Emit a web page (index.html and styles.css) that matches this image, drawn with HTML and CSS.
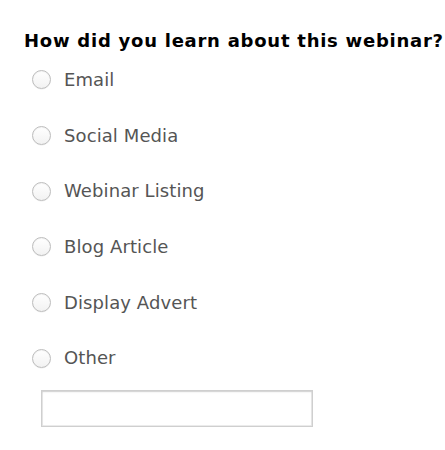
FILE: index.html
```html
<!DOCTYPE html>
<html>
<head>
<meta charset="utf-8">
<link rel="stylesheet" href="styles.css">
</head>
<body>
<form class="survey">
  <h2 class="question">How did you learn about this webinar?</h2>
  <div class="options">
    <label class="option"><span class="radio"></span><span class="label">Email</span></label>
    <label class="option"><span class="radio"></span><span class="label">Social Media</span></label>
    <label class="option"><span class="radio"></span><span class="label">Webinar Listing</span></label>
    <label class="option"><span class="radio"></span><span class="label">Blog Article</span></label>
    <label class="option"><span class="radio"></span><span class="label">Display Advert</span></label>
    <label class="option"><span class="radio"></span><span class="label">Other</span></label>
  </div>
  <div class="other-box"></div>
</form>
</body>
</html>
```
FILE: styles.css
```css
html, body {
  margin: 0;
  padding: 0;
  background: #fff;
}
.survey {
  font-family: "DejaVu Sans", Verdana, sans-serif;
  padding-left: 24px;
}
.question {
  margin: 30px 0 0 0;
  font-size: 18px;
  line-height: 22px;
  letter-spacing: 0.75px;
  font-weight: bold;
  color: #000;
  white-space: nowrap;
}
.options {
  display: flex;
  flex-direction: column;
}
.option {
  display: flex;
  align-items: center;
  height: 55.7px;
  padding-left: 8px;
}
.radio {
  width: 17px;
  height: 17px;
  border-radius: 50%;
  border: 1px solid #bdbdbd;
  background: linear-gradient(#ffffff, #f2f2f2);
  box-shadow: inset 0 1px 1px rgba(0,0,0,0.05), 0 0.5px 0.5px rgba(0,0,0,0.08);
  flex: none;
}
.label {
  margin-left: 13px;
  font-size: 18px;
  line-height: 22px;
  letter-spacing: 0.1px;
  color: #555;
}
.other-box {
  margin: 4px 0 0 17px;
  width: 270px;
  height: 35px;
  border: 1px solid #cfcfcf;
  background: #fff;
  box-shadow: inset 0 1px 2px rgba(0,0,0,0.12), inset 0 0 0 1px #ececec;
}
```
